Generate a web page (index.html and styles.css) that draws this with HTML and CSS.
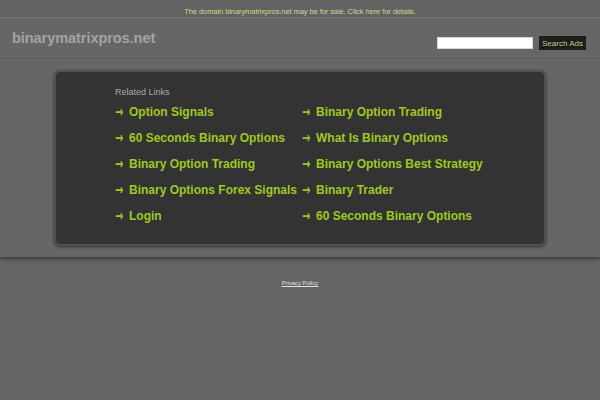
FILE: index.html
```html
<!DOCTYPE html>
<html>
<head>
<meta charset="utf-8">
<title>binarymatrixpros.net</title>
<link rel="stylesheet" href="styles.css">
</head>
<body>
<div class="topbar"><a class="sale" href="#">The domain binarymatrixpros.net may be for sale. Click here for details.</a></div>
<div class="band">
  <div class="header">
    <div class="title">binarymatrixpros.net</div>
    <form class="search">
      <input class="search-input" type="text">
      <button class="search-btn" type="button">Search Ads</button>
    </form>
  </div>
  <div class="main">
    <div class="panel">
      <div class="related">Related Links</div>
      <ul class="links">
        <li><a href="#"><span class="arrow">→</span>Option Signals</a></li>
        <li><a href="#"><span class="arrow">→</span>Binary Option Trading</a></li>
        <li><a href="#"><span class="arrow">→</span>60 Seconds Binary Options</a></li>
        <li><a href="#"><span class="arrow">→</span>What Is Binary Options</a></li>
        <li><a href="#"><span class="arrow">→</span>Binary Option Trading</a></li>
        <li><a href="#"><span class="arrow">→</span>Binary Options Best Strategy</a></li>
        <li><a href="#"><span class="arrow">→</span>Binary Options Forex Signals</a></li>
        <li><a href="#"><span class="arrow">→</span>Binary Trader</a></li>
        <li><a href="#"><span class="arrow">→</span>Login</a></li>
        <li><a href="#"><span class="arrow">→</span>60 Seconds Binary Options</a></li>
      </ul>
    </div>
  </div>
</div>
<div class="footer"><a class="privacy" href="#">Privacy Policy</a></div>
</body>
</html>
```
FILE: styles.css
```css
html, body {
  margin: 0;
  padding: 0;
  background: #656565;
  font-family: "Liberation Sans", Arial, sans-serif;
}
.topbar {
  height: 17px;
  background: #636363;
  border-bottom: 1px solid #7c7c7c;
  text-align: center;
  line-height: 17px;
}
.sale {
  color: #c9d88c;
  font-size: 7.6px;
  letter-spacing: -0.12px;
  text-decoration: none;
}
.band {
  background: #666666;
  box-shadow: 0 2px 4px rgba(0, 0, 0, 0.45);
  position: relative;
}
.header {
  height: 40px;
  display: flex;
  align-items: center;
  justify-content: space-between;
  padding: 0 14px 0 12px;
  border-bottom: 1px solid #585858;
}
.title {
  color: #a3a3a3;
  font-weight: bold;
  font-size: 14.6px;
  letter-spacing: -0.1px;
}
.search {
  display: flex;
  align-items: center;
  margin: 10px 0 0 0;
}
.search-input {
  width: 96px;
  height: 12px;
  box-sizing: border-box;
  border: 1px solid #d8d8d8;
  background: #ffffff;
  padding: 0;
  margin: 0 6px 0 0;
}
.search-btn {
  height: 14px;
  width: 47px;
  padding: 0;
  border: none;
  background: #1e1e1e;
  color: #b9d27e;
  font-family: "Liberation Sans", Arial, sans-serif;
  font-size: 8px;
}
.main {
  padding: 10px 54px 11px 54px;
  border-top: 1px solid #707070;
}
.panel {
  background: #333333;
  border: 2px solid #525252;
  border-radius: 6px;
  box-shadow: 0 1px 3px rgba(0, 0, 0, 0.55);
  padding: 14px 20px 16px 59px;
  height: 142px;
}
.related {
  color: #a8a8a8;
  font-size: 9px;
  line-height: 12px;
}
.links {
  list-style: none;
  margin: 0;
  padding: 0;
  display: grid;
  grid-template-columns: 187px auto;
  grid-auto-rows: 26px;
}
.links li {
  line-height: 26px;
  white-space: nowrap;
}
.links a {
  color: #9ec91f;
  font-weight: bold;
  font-size: 12px;
  text-decoration: none;
}
.arrow {
  display: inline-block;
  width: 14px;
  line-height: 0;
  font-family: "DejaVu Sans", sans-serif;
  font-weight: bold;
  font-size: 15px;
  transform-origin: 0 0;
  transform: translateY(1.4px) scale(0.66, 1);
}
.footer {
  text-align: center;
  padding-top: 18px;
  line-height: 10px;
}
.privacy {
  color: #e0e0e0;
  font-size: 5.9px;
}
```
